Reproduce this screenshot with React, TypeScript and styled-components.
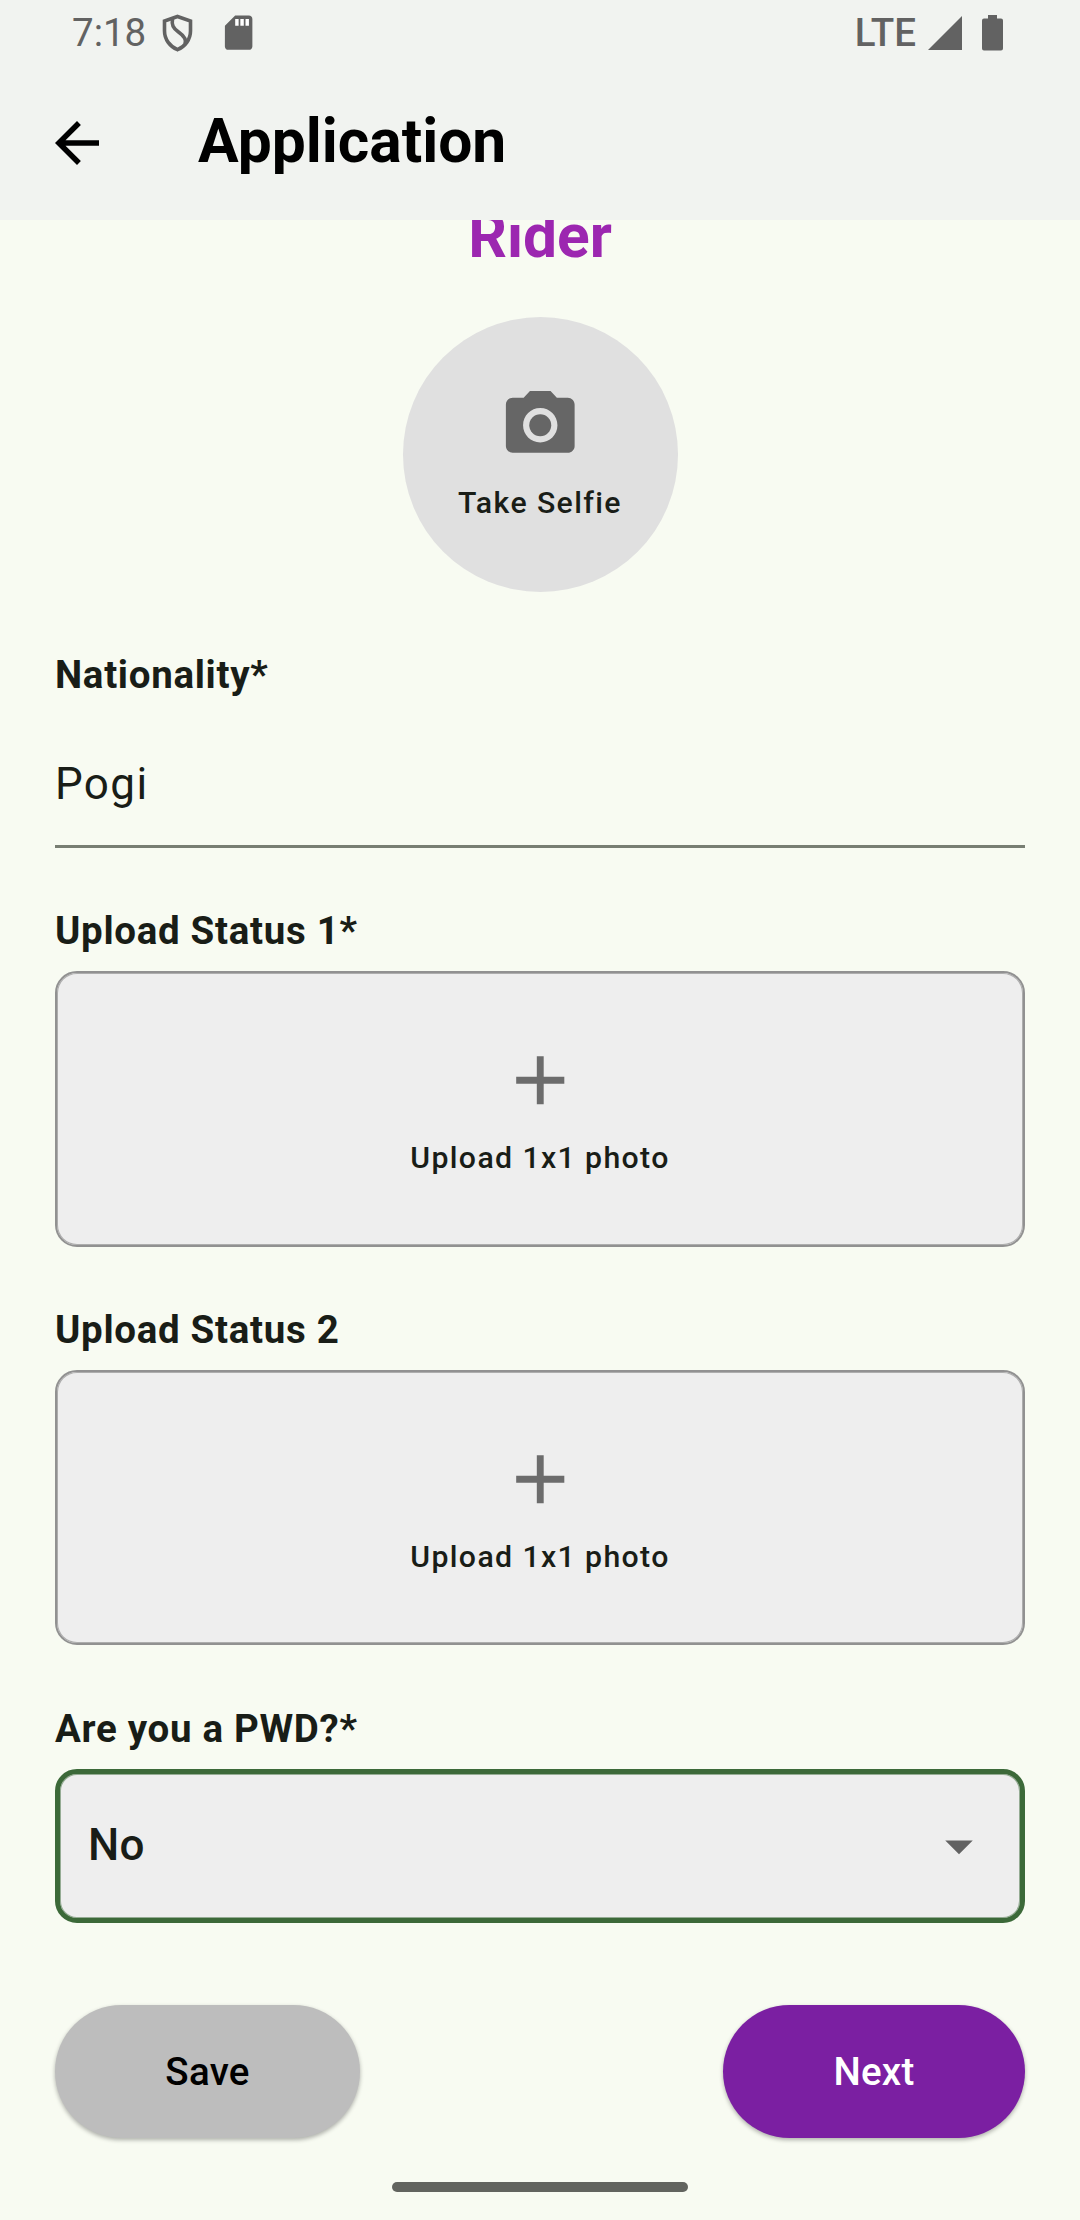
import React from "react";
import styled, { createGlobalStyle } from "styled-components";

const GlobalStyle = createGlobalStyle`
  * { box-sizing: border-box; }
  body { margin: 0; background: #f8fbf2; }
`;

const Screen = styled.div`
  width: 1080px;
  height: 2220px;
  display: flex;
  flex-direction: column;
  overflow: hidden;
  background: #f8fbf2;
  color: #191d17;
  font-family: Roboto, "Noto Sans", sans-serif;
`;

const Header = styled.header`
  flex: none;
  height: 220px;
  background: #f1f3f0;
`;

const StatusBar = styled.div`
  height: 66px;
  padding: 0 77px 0 72px;
  display: flex;
  justify-content: space-between;
  color: #626262;
  font-size: 38.5px;
  line-height: 66px;
`;

const StatusGroup = styled.div`
  display: flex;
  align-items: center;
`;

const Clock = styled.span`
  width: 90px;
`;

const Network = styled.span`
  font-weight: 500;
  margin-right: 12px;
`;

const Glyph = styled.svg<{ $w: number; $h: number; $ml?: number }>`
  display: block;
  flex: none;
  width: ${(p) => p.$w}px;
  height: ${(p) => p.$h}px;
  margin-left: ${(p) => p.$ml ?? 0}px;
`;

const AppBar = styled.div`
  height: 154px;
  padding-left: 44px;
  display: flex;
  align-items: center;
  color: #000;
`;

const Title = styled.h1`
  margin: 0 0 2px 88px;
  font-size: 60.5px;
  line-height: 76px;
  font-weight: 700;
`;

const Body = styled.main`
  flex: 1;
  min-height: 0;
  overflow: hidden;
  padding: 0 55px;
  display: flex;
  flex-direction: column;
`;

const Role = styled.h2`
  flex: none;
  margin: -19px 0 44px;
  text-align: center;
  color: #9c27b0;
  font-size: 60.5px;
  line-height: 72px;
  font-weight: 700;
`;

const Selfie = styled.button`
  flex: none;
  align-self: center;
  width: 275px;
  height: 275px;
  padding: 67px 0 0;
  border: 0;
  border-radius: 50%;
  background: #e0e0e0;
  display: flex;
  flex-direction: column;
  align-items: center;
  color: inherit;
  font-family: inherit;
`;

const Caption = styled.span`
  margin-top: 14px;
  font-size: 30.25px;
  line-height: 44px;
  font-weight: 500;
  letter-spacing: 1.375px;
`;

const Field = styled.section`
  flex: none;
  display: flex;
  flex-direction: column;
  margin-top: 56px;
`;

const Label = styled.label<{ $gap?: number }>`
  font-size: 38.5px;
  line-height: 54px;
  font-weight: 700;
  letter-spacing: 0.6875px;
  margin-bottom: ${(p) => p.$gap ?? 0}px;
`;

const TextInput = styled.input`
  height: 146px;
  padding: 20px 0 0;
  border: 0;
  border-bottom: 3px solid #787e73;
  outline: 0;
  background: transparent;
  color: inherit;
  font: 400 44px Roboto, "Noto Sans", sans-serif;
  letter-spacing: 1.375px;
`;

const Upload = styled.button<{ $h: number }>`
  height: ${(p) => p.$h}px;
  margin-bottom: ${(p) => 276 - p.$h}px;
  padding: 66px 0 0;
  border: 2px solid #919191;
  border-radius: 22px;
  box-shadow: inset 0 0 0 1px rgba(145, 145, 145, 0.7);
  background: #eee;
  display: flex;
  flex-direction: column;
  align-items: center;
  color: inherit;
  font-family: inherit;
`;

const Select = styled.div`
  height: 154px;
  padding: 0 28px;
  border: 5px solid #3c6939;
  border-radius: 22px;
  box-shadow: inset 0 0 0 1px rgba(60, 105, 57, 0.5);
  background: #eee;
  display: flex;
  align-items: center;
  justify-content: space-between;
  font-size: 44px;
  font-weight: 500;
  letter-spacing: 0.4px;
`;

const Choice = styled.span`
  padding-bottom: 3px;
`;

const Actions = styled.div`
  margin-top: 82px;
  display: flex;
  justify-content: space-between;
`;

const Pill = styled.button<{ $primary?: boolean }>`
  width: ${(p) => (p.$primary ? 302 : 305)}px;
  height: 133px;
  padding: 0;
  border: 0;
  border-radius: 67px;
  background: ${(p) => (p.$primary ? "#7b1fa2" : "#bdbdbd")};
  color: ${(p) => (p.$primary ? "#fff" : "#000")};
  font: 500 38.5px Roboto, "Noto Sans", sans-serif;
  letter-spacing: 0.275px;
  box-shadow: 0 2px 4px rgba(0, 0, 0, 0.3);
`;

const HomeBar = styled.div`
  flex: none;
  align-self: center;
  width: 296px;
  height: 10px;
  margin-bottom: 28px;
  border-radius: 5px;
  background: #62645f;
`;

function CameraIcon() {
  return (
    <Glyph $w={82.5} $h={82.5} viewBox="0 0 24 24" fill="#666">
      <circle cx="12" cy="12" r="3.2" />
      <path d="M9 2 7.17 4H4c-1.1 0-2 .9-2 2v12c0 1.1.9 2 2 2h16c1.1 0 2-.9 2-2V6c0-1.1-.9-2-2-2h-3.17L15 2H9zm3 15c-2.76 0-5-2.24-5-5s2.24-5 5-5 5 2.24 5 5-2.24 5-5 5z" />
    </Glyph>
  );
}

function UploadField({ label, height }: { label: string; height: number }) {
  return (
    <Field>
      <Label $gap={13}>{label}</Label>
      <Upload $h={height}>
        <Glyph $w={82.5} $h={82.5} viewBox="0 0 24 24" fill="#6c6c6c">
          <path d="M19 13h-6v6h-2v-6H5v-2h6V5h2v6h6v2z" />
        </Glyph>
        <Caption>Upload 1x1 photo</Caption>
      </Upload>
    </Field>
  );
}

export default function App() {
  return (
    <Screen>
      <GlobalStyle />
      <Header>
        <StatusBar>
          <StatusGroup>
            <Clock>7:18</Clock>
            <Glyph $w={31} $h={38} viewBox="0 0 31 38" fill="none" stroke="#626262" strokeWidth="3.6">
              <path d="M15.500 2.500 28.500 7V17C28.500 25.500 23 32.500 15.500 35.700C8 32.500 2.500 25.500 2.500 17V7Z" />
              <path d="M10.500 4.500C9.500 11 11 14 16.500 18C21.500 21.500 25 25 23 30" />
            </Glyph>
            <Glyph $w={41.25} $h={41.25} $ml={25} viewBox="0 0 24 24" fill="#626262">
              <rect x="9" y="3.500" width="10" height="5" fill="#fff" />
              <path d="M18 2h-8L4.020 8 4 20c0 1.100.9 2 2 2h12c1.100 0 2-.9 2-2V4c0-1.100-.9-2-2-2zm-6 6h-2V4h2v4zm3 0h-2V4h2v4zm3 0h-2V4h2v4z" />
            </Glyph>
          </StatusGroup>
          <StatusGroup>
            <Network>LTE</Network>
            <Glyph $w={34} $h={34} viewBox="0 0 34 34" fill="#626262">
              <path d="M34 0V34H0Z" />
            </Glyph>
            <Glyph $w={21} $h={36} $ml={20} viewBox="0 0 21 36" fill="#626262">
              <path d="M6 0h9v3.500h4a2 2 0 0 1 2 2v28a2 2 0 0 1-2 2H2a2 2 0 0 1-2-2V5.500a2 2 0 0 1 2-2h4z" />
            </Glyph>
          </StatusGroup>
        </StatusBar>
        <AppBar>
          <Glyph $w={66} $h={66} viewBox="0 0 24 24" fill="#000">
            <path d="M20 11H7.830l5.590-5.590L12 4l-8 8 8 8 1.410-1.410L7.830 13H20v-2z" />
          </Glyph>
          <Title>Application</Title>
        </AppBar>
      </Header>
      <Body>
        <Role>Rider</Role>
        <Selfie>
          <CameraIcon />
          <Caption>Take Selfie</Caption>
        </Selfie>
        <Field>
          <Label>Nationality*</Label>
          <TextInput defaultValue="Pogi" />
        </Field>
        <UploadField label="Upload Status 1*" height={276} />
        <UploadField label="Upload Status 2" height={275} />
        <Field>
          <Label $gap={13}>Are you a PWD?*</Label>
          <Select>
            <Choice>No</Choice>
            <Glyph $w={66} $h={66} viewBox="0 0 24 24" fill="#626262">
              <path d="M7 10l5 5 5-5z" />
            </Glyph>
          </Select>
        </Field>
        <Actions>
          <Pill>Save</Pill>
          <Pill $primary>Next</Pill>
        </Actions>
      </Body>
      <HomeBar />
    </Screen>
  );
}
